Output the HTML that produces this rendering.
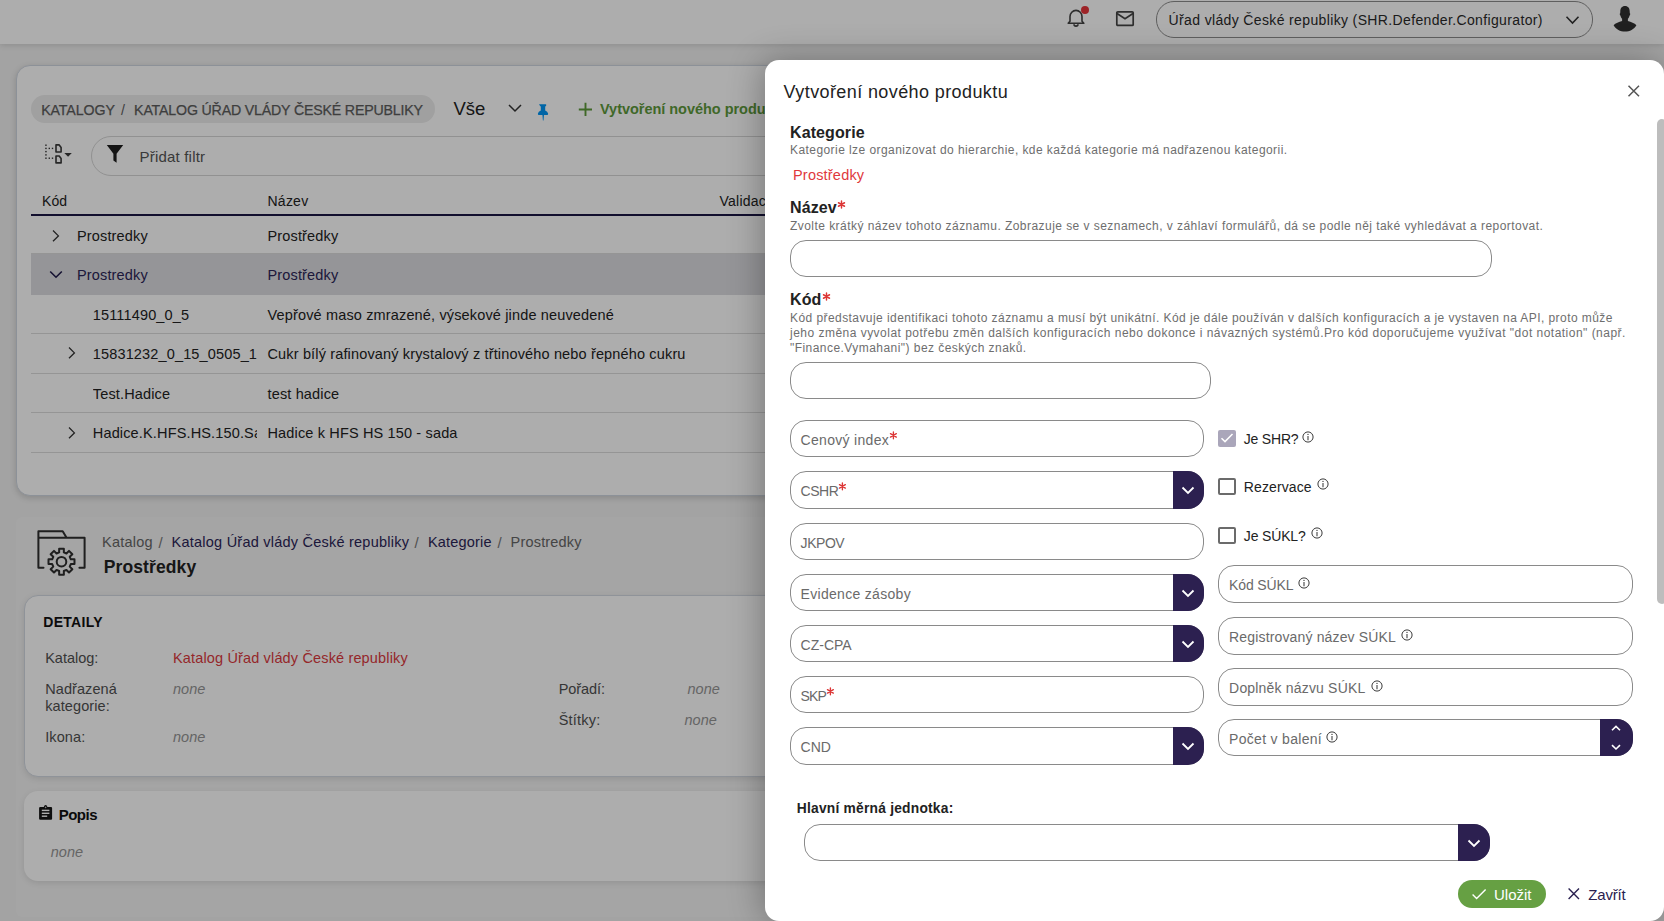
<!DOCTYPE html>
<html><head><meta charset="utf-8"><style>
*{box-sizing:border-box;margin:0;padding:0}
html,body{width:1664px;height:921px;overflow:hidden}
body{background:#f0f0f0;font-family:"Liberation Sans",sans-serif;color:#222;position:relative}
.a{position:absolute;white-space:nowrap;line-height:1}
svg{position:absolute;overflow:visible}
</style></head><body>
<div style="position:absolute;left:0px;top:0px;width:1664px;height:44px;background:#fff;box-shadow:0 1px 6px rgba(0,0,0,.14)"></div>
<svg style="left:1064px;top:7px" width="24" height="22" viewBox="0 0 24 22"><path d="M4.2 16.3 L6 14.2 V9.6 A6 6.2 0 0 1 18 9.6 V14.2 L19.8 16.3 Z" fill="none" stroke="#444" stroke-width="1.6" stroke-linejoin="round"/><path d="M10 17.2 A2 1.9 0 0 0 14 17.2" fill="none" stroke="#444" stroke-width="1.6"/></svg>
<div style="position:absolute;left:1080.8px;top:6px;width:8.4px;height:8.4px;background:#e8363c;border-radius:50%"></div>
<svg style="left:1115px;top:10px" width="20" height="17" viewBox="0 0 20 17"><rect x="1.8" y="1.8" width="16.4" height="13.6" rx="1" fill="none" stroke="#444" stroke-width="1.7"/><path d="M2 3.5 L10 8.8 L18 3.5" fill="none" stroke="#444" stroke-width="1.7"/></svg>
<div style="position:absolute;left:1156px;top:1px;width:437px;height:36.5px;border:1px solid #8c8c8c;border-radius:18px;background:#fff"></div>
<div class="a" style="left:1168.6px;top:12.95px;font-size:14px;font-weight:400;color:#2a2a2a;letter-spacing:0.36px;font-style:normal;">Úřad vlády České republiky (SHR.Defender.Configurator)</div>
<svg style="left:1565px;top:15px" width="15" height="10" viewBox="0 0 15 10"><path d="M1.5 1.8 L7.5 8 L13.5 1.8" fill="none" stroke="#333" stroke-width="1.6"/></svg>
<svg style="left:1612px;top:5px" width="26" height="28" viewBox="0 0 26 28"><path d="M13 0.9 C16.2 0.9 17.7 3.2 17.7 6.4 L17.8 8.2 C18.4 8.3 18.4 9.8 17.6 10.5 C17.2 12 16.6 13 15.9 13.8 V16 C19 16.9 22.6 18.3 24.4 20.2 C22 24.3 17.8 26.5 13 26.5 C8.2 26.5 4 24.3 1.6 20.2 C3.4 18.3 7 16.9 10.1 16 V13.8 C9.4 13 8.8 12 8.4 10.5 C7.6 9.8 7.6 8.3 8.2 8.2 L8.3 6.4 C8.3 3.2 9.8 0.9 13 0.9 Z" fill="#303030"/></svg>
<div style="position:absolute;left:16px;top:65px;width:1632px;height:431px;background:#fff;border:1px solid #cfd6e0;border-radius:14px;box-shadow:0 2px 6px rgba(0,0,0,.16)"></div>
<div style="position:absolute;left:31px;top:95px;width:404px;height:28px;background:#ececec;border-radius:14px"></div>
<div class="a" style="left:41.2px;top:103.28px;font-size:14.2px;font-weight:400;color:#5c5c5c;letter-spacing:-0.1px;font-style:normal;-webkit-text-stroke:0.25px #5c5c5c">KATALOGY</div>
<div class="a" style="left:121px;top:103.28px;font-size:14.2px;font-weight:400;color:#5c5c5c;letter-spacing:0px;font-style:normal;">/</div>
<div class="a" style="left:134.1px;top:103.28px;font-size:14.2px;font-weight:400;color:#5c5c5c;letter-spacing:-0.18px;font-style:normal;-webkit-text-stroke:0.25px #5c5c5c">KATALOG ÚŘAD VLÁDY ČESKÉ REPUBLIKY</div>
<div class="a" style="left:453.4px;top:99.64px;font-size:18.5px;font-weight:400;color:#222;letter-spacing:0px;font-style:normal;">Vše</div>
<svg style="left:508px;top:104px" width="14" height="9" viewBox="0 0 14 9"><path d="M1 1 L7 7 L13 1" fill="none" stroke="#333" stroke-width="1.5"/></svg>
<svg style="left:536px;top:103px" width="14" height="19" viewBox="0 0 14 19"><path d="M3 1.6 Q3 1.2 3.6 1.2 H9.6 Q10.2 1.2 10.2 1.6 V2.6 Q10.2 3.2 9.2 3.4 V7.6 Q11.6 8.6 12.1 10.6 Q12.3 12 11.4 12 H2.6 Q1.7 12 1.9 10.6 Q2.4 8.6 4.8 7.6 V3.4 Q3.8 3.2 3.8 2.6 Z" fill="#0096f5"/><path d="M6.4 11.8 H8 L7.5 17.4 H6.9 Z" fill="#0096f5"/></svg>
<svg style="left:578px;top:101.5px" width="15" height="15" viewBox="0 0 15 15"><path d="M7.5 0.8 V14 M0.8 7.5 H14" stroke="#5d9a3a" stroke-width="1.9"/></svg>
<div class="a" style="left:600px;top:102.23px;font-size:14.5px;font-weight:700;color:#5e9a3c;letter-spacing:-0.03px;font-style:normal;">Vytvoření nového produktu</div>
<svg style="left:44px;top:143px" width="30" height="22" viewBox="0 0 30 22"><g fill="#3a3a3a"><rect x="1.2" y="1.5" width="1.5" height="1.4"/><rect x="1.2" y="4.7" width="1.5" height="1.4"/><rect x="1.2" y="7.9" width="1.5" height="1.4"/><rect x="1.2" y="11.2" width="1.5" height="1.4"/><rect x="1.2" y="14.5" width="1.5" height="1.4"/><rect x="4.6" y="4.7" width="1.4" height="1.4"/><rect x="7.8" y="4.7" width="1.4" height="1.4"/><rect x="4.6" y="14.5" width="1.4" height="1.4"/><rect x="7.8" y="14.5" width="1.4" height="1.4"/></g><path d="M12 1.9 H15.2 L17.1 4.4 V9 H12 Z M12 13 H15.2 L17.1 15.5 V19.9 H12 Z" fill="none" stroke="#3a3a3a" stroke-width="1.6" stroke-linejoin="round"/><path d="M20.3 10.1 H27.8 L24.05 13.7 Z" fill="#3a3a3a"/></svg>
<div style="position:absolute;left:91px;top:136px;width:1600px;height:40px;border:1px solid #d6d6d6;border-radius:20px"></div>
<svg style="left:106px;top:144px" width="18" height="20" viewBox="0 0 18 20"><path d="M0.8 1 H17.2 L10.6 9.8 V18.8 L7.4 16.6 V9.8 Z" fill="#1e1e1e"/></svg>
<div class="a" style="left:139.5px;top:148.50px;font-size:15px;font-weight:400;color:#555;letter-spacing:0.2px;font-style:normal;">Přidat filtr</div>
<div class="a" style="left:42.1px;top:193.95px;font-size:14px;font-weight:400;color:#222;letter-spacing:0px;font-style:normal;">Kód</div>
<div class="a" style="left:267.5px;top:193.95px;font-size:14px;font-weight:400;color:#222;letter-spacing:0.24px;font-style:normal;">Název</div>
<div class="a" style="left:719.5px;top:193.95px;font-size:14px;font-weight:400;color:#222;letter-spacing:0.24px;font-style:normal;">Validace</div>
<div style="position:absolute;left:31px;top:214px;width:1600px;height:2px;background:#1b1745"></div>
<div style="position:absolute;left:31px;top:253px;width:1600px;height:1px;background:#dcdcdc"></div>
<svg style="left:51px;top:228.6px" width="10" height="14" viewBox="0 0 10 14"><path d="M2 1.5 L7.4 6.9 L2 12.3" fill="none" stroke="#333" stroke-width="1.3"/></svg>
<div class="a" style="left:77.0px;top:229.33px;font-size:14.5px;font-weight:400;color:#222;letter-spacing:0.15px;font-style:normal;overflow:hidden;padding-bottom:5px;width:180.0px">Prostredky</div>
<div class="a" style="left:267.5px;top:229.33px;font-size:14.5px;font-weight:400;color:#222;letter-spacing:0.15px;font-style:normal;">Prostředky</div>
<div style="position:absolute;left:31px;top:254px;width:1600px;height:41px;background:#dcdce0"></div>
<svg style="left:49px;top:270.4px" width="14" height="9" viewBox="0 0 14 9"><path d="M1.2 1.5 L7 7.2 L12.8 1.5" fill="none" stroke="#1f1a4a" stroke-width="1.6"/></svg>
<div class="a" style="left:77.0px;top:268.13px;font-size:14.5px;font-weight:400;color:#2b2557;letter-spacing:0.15px;font-style:normal;overflow:hidden;padding-bottom:5px;width:180.0px">Prostredky</div>
<div class="a" style="left:267.5px;top:268.13px;font-size:14.5px;font-weight:400;color:#2b2557;letter-spacing:0.15px;font-style:normal;">Prostředky</div>
<div style="position:absolute;left:31px;top:333px;width:1600px;height:1px;background:#dcdcdc"></div>
<div class="a" style="left:92.8px;top:307.73px;font-size:14.5px;font-weight:400;color:#222;letter-spacing:0.15px;font-style:normal;overflow:hidden;padding-bottom:5px;width:164.2px">15111490_0_5</div>
<div class="a" style="left:267.5px;top:307.73px;font-size:14.5px;font-weight:400;color:#222;letter-spacing:0.15px;font-style:normal;">Vepřové maso zmrazené, výsekové jinde neuvedené</div>
<div style="position:absolute;left:31px;top:373px;width:1600px;height:1px;background:#dcdcdc"></div>
<svg style="left:67px;top:346.2px" width="10" height="14" viewBox="0 0 10 14"><path d="M2 1.5 L7.4 6.9 L2 12.3" fill="none" stroke="#333" stroke-width="1.3"/></svg>
<div class="a" style="left:92.8px;top:346.93px;font-size:14.5px;font-weight:400;color:#222;letter-spacing:0.15px;font-style:normal;overflow:hidden;padding-bottom:5px;width:164.2px">15831232_0_15_0505_1221</div>
<div class="a" style="left:267.5px;top:346.93px;font-size:14.5px;font-weight:400;color:#222;letter-spacing:0.15px;font-style:normal;">Cukr bílý rafinovaný krystalový z třtinového nebo řepného cukru</div>
<div style="position:absolute;left:31px;top:412px;width:1600px;height:1px;background:#dcdcdc"></div>
<div class="a" style="left:92.8px;top:386.93px;font-size:14.5px;font-weight:400;color:#222;letter-spacing:0.15px;font-style:normal;overflow:hidden;padding-bottom:5px;width:164.2px">Test.Hadice</div>
<div class="a" style="left:267.5px;top:386.93px;font-size:14.5px;font-weight:400;color:#222;letter-spacing:0.15px;font-style:normal;">test hadice</div>
<div style="position:absolute;left:31px;top:452px;width:1600px;height:1px;background:#dcdcdc"></div>
<svg style="left:67px;top:425.5px" width="10" height="14" viewBox="0 0 10 14"><path d="M2 1.5 L7.4 6.9 L2 12.3" fill="none" stroke="#333" stroke-width="1.3"/></svg>
<div class="a" style="left:92.8px;top:426.23px;font-size:14.5px;font-weight:400;color:#222;letter-spacing:0.15px;font-style:normal;overflow:hidden;padding-bottom:5px;width:164.2px">Hadice.K.HFS.HS.150.Sada</div>
<div class="a" style="left:267.5px;top:426.23px;font-size:14.5px;font-weight:400;color:#222;letter-spacing:0.15px;font-style:normal;">Hadice k HFS HS 150 - sada</div>
<div style="position:absolute;left:16px;top:517px;width:1632px;height:400px;background:#f3f3f3;border-radius:6px"></div>
<svg style="left:32px;top:524px" width="60" height="56" viewBox="0 0 60 56"><path d="M11.5 43.8 H6.4 V7.2 H30.7 L34.6 13.7 H52.6 V43.8 H47.4 M6.4 13.7 H34.6" fill="none" stroke="#2e2e2e" stroke-width="2" stroke-linejoin="round" stroke-linecap="round"/><path d="M27.17 28.39 L27.14 24.71 L31.86 24.71 L31.83 28.39 L34.44 29.47 L37.01 26.85 L40.35 30.19 L37.73 32.76 L38.81 35.37 L42.49 35.34 L42.49 40.06 L38.81 40.03 L37.73 42.64 L40.35 45.21 L37.01 48.55 L34.44 45.93 L31.83 47.01 L31.86 50.69 L27.14 50.69 L27.17 47.01 L24.56 45.93 L21.99 48.55 L18.65 45.21 L21.27 42.64 L20.19 40.03 L16.51 40.06 L16.51 35.34 L20.19 35.37 L21.27 32.76 L18.65 30.19 L21.99 26.85 L24.56 29.47 Z" fill="none" stroke="#2e2e2e" stroke-width="2" stroke-linejoin="round"/><circle cx="29.5" cy="37.7" r="4.8" fill="none" stroke="#2e2e2e" stroke-width="2"/></svg>
<div class="a" style="left:102px;top:535.33px;font-size:14.5px;font-weight:400;color:#666;letter-spacing:0.25px;font-style:normal;">Katalog</div>
<div class="a" style="left:158.6px;top:534.90px;font-size:15px;font-weight:400;color:#777;letter-spacing:0px;font-style:normal;">/</div>
<div class="a" style="left:171.6px;top:535.33px;font-size:14.5px;font-weight:400;color:#2b2557;letter-spacing:0.23px;font-style:normal;">Katalog Úřad vlády České republiky</div>
<div class="a" style="left:414.4px;top:534.90px;font-size:15px;font-weight:400;color:#777;letter-spacing:0px;font-style:normal;">/</div>
<div class="a" style="left:427.9px;top:535.33px;font-size:14.5px;font-weight:400;color:#2b2557;letter-spacing:0.2px;font-style:normal;">Kategorie</div>
<div class="a" style="left:497.6px;top:534.90px;font-size:15px;font-weight:400;color:#777;letter-spacing:0px;font-style:normal;">/</div>
<div class="a" style="left:510.6px;top:535.33px;font-size:14.5px;font-weight:400;color:#666;letter-spacing:0.18px;font-style:normal;">Prostredky</div>
<div class="a" style="left:103.8px;top:558.89px;font-size:17.5px;font-weight:700;color:#222;letter-spacing:0.1px;font-style:normal;">Prostředky</div>
<div style="position:absolute;left:24px;top:594.5px;width:1632px;height:182px;background:#fff;border:1px solid #d3d9e2;border-radius:14px;box-shadow:0 2px 6px rgba(0,0,0,.10)"></div>
<div class="a" style="left:43.3px;top:615.15px;font-size:14px;font-weight:700;color:#111;letter-spacing:0.28px;font-style:normal;">DETAILY</div>
<div class="a" style="left:45.2px;top:651.03px;font-size:14.5px;font-weight:400;color:#505050;letter-spacing:0px;font-style:normal;">Katalog:</div>
<div class="a" style="left:173px;top:651.03px;font-size:14.5px;font-weight:400;color:#dc3a3e;letter-spacing:0.15px;font-style:normal;">Katalog Úřad vlády České republiky</div>
<div class="a" style="left:45.2px;top:682.13px;font-size:14.5px;font-weight:400;color:#505050;letter-spacing:0.08px;font-style:normal;">Nadřazená</div>
<div class="a" style="left:45.2px;top:699.03px;font-size:14.5px;font-weight:400;color:#505050;letter-spacing:0.1px;font-style:normal;">kategorie:</div>
<div class="a" style="left:173px;top:682.13px;font-size:14.5px;font-weight:400;color:#959595;letter-spacing:0px;font-style:italic;">none</div>
<div class="a" style="left:45.2px;top:730.03px;font-size:14.5px;font-weight:400;color:#505050;letter-spacing:0.1px;font-style:normal;">Ikona:</div>
<div class="a" style="left:173px;top:730.03px;font-size:14.5px;font-weight:400;color:#959595;letter-spacing:0px;font-style:italic;">none</div>
<div class="a" style="left:558.7px;top:681.73px;font-size:14.5px;font-weight:400;color:#505050;letter-spacing:-0.08px;font-style:normal;">Pořadí:</div>
<div class="a" style="left:687.5px;top:681.73px;font-size:14.5px;font-weight:400;color:#959595;letter-spacing:0px;font-style:italic;">none</div>
<div class="a" style="left:558.7px;top:713.13px;font-size:14.5px;font-weight:400;color:#505050;letter-spacing:0.2px;font-style:normal;">Štítky:</div>
<div class="a" style="left:684.5px;top:713.13px;font-size:14.5px;font-weight:400;color:#959595;letter-spacing:0px;font-style:italic;">none</div>
<div style="position:absolute;left:24px;top:791px;width:1632px;height:90px;background:#fff;border-radius:14px;box-shadow:0 2px 6px rgba(0,0,0,.10)"></div>
<svg style="left:34px;top:800px" width="30" height="24" viewBox="0 0 30 24"><path d="M6.3 6.9 H9.8 Q10.2 5 11.6 5 Q13 5 13.4 6.9 H17 Q18.1 6.9 18.1 8 V18.7 Q18.1 19.8 17 19.8 H6.3 Q5.1 19.8 5.1 18.7 V8 Q5.1 6.9 6.3 6.9 Z" fill="#161616"/><circle cx="11.6" cy="7.4" r="0.8" fill="#bbb"/><rect x="7.8" y="9.7" width="7.6" height="1.4" fill="#fff"/><rect x="7.8" y="12.6" width="7.6" height="1.4" fill="#fff"/><rect x="7.8" y="15.5" width="5.4" height="1.4" fill="#fff"/></svg>
<div class="a" style="left:58.7px;top:807.00px;font-size:15px;font-weight:700;color:#111;letter-spacing:-0.5px;font-style:normal;">Popis</div>
<div class="a" style="left:50.8px;top:845.13px;font-size:14.5px;font-weight:400;color:#959595;letter-spacing:0px;font-style:italic;">none</div>
<div style="position:absolute;left:0px;top:0px;width:1664px;height:921px;background:rgba(0,0,0,.32)"></div>
<div style="position:absolute;left:765px;top:60px;width:899px;height:861px;background:#fff;border-radius:14px;box-shadow:-3px 0 34px rgba(0,0,0,.30)"></div>
<div class="a" style="left:783.6px;top:82.86px;font-size:18px;font-weight:400;color:#222;letter-spacing:0.4px;font-style:normal;">Vytvoření nového produktu</div>
<svg style="left:1627px;top:85px" width="13" height="13" viewBox="0 0 13 13"><path d="M1.5 0.8 L12 11.3 M12 0.8 L1.5 11.3" stroke="#555" stroke-width="1.5"/></svg>
<div style="position:absolute;left:1657px;top:119px;width:10px;height:485px;background:#bdbdbd;border-radius:5px"></div>
<div class="a" style="left:790px;top:124.66px;font-size:16px;font-weight:700;color:#222;letter-spacing:0.1px;font-style:normal;">Kategorie</div>
<div class="a" style="left:790px;top:143.64px;font-size:12px;font-weight:400;color:#6e6e6e;letter-spacing:0.43px;font-style:normal;">Kategorie lze organizovat do hierarchie, kde každá kategorie má nadřazenou kategorii.</div>
<div class="a" style="left:793px;top:167.93px;font-size:14.5px;font-weight:400;color:#e0383c;letter-spacing:0.2px;font-style:normal;">Prostředky</div>
<div class="a" style="left:790px;top:200.46px;font-size:16px;font-weight:700;color:#222;letter-spacing:0.1px;font-style:normal;">Název<svg class="ast" style="position:relative;display:inline-block;vertical-align:top;top:-0.4px;margin-left:0.3px" width="9.0" height="9.0" viewBox="0 0 9.0 9.0"><path d="M4.50 1.00 L4.50 8.00 M7.53 2.75 L1.47 6.25 M7.53 6.25 L1.47 2.75 " stroke="#dc3535" stroke-width="1.45" stroke-linecap="round"/></svg></div>
<div class="a" style="left:790px;top:220.04px;font-size:12px;font-weight:400;color:#6e6e6e;letter-spacing:0.45px;font-style:normal;">Zvolte krátký název tohoto záznamu. Zobrazuje se v seznamech, v záhlaví formulářů, dá se podle něj také vyhledávat a reportovat.</div>
<div style="position:absolute;left:790px;top:240px;width:701.5px;height:37px;border:1px solid #8a8a8a;border-radius:16px"></div>
<div class="a" style="left:790px;top:292.16px;font-size:16px;font-weight:700;color:#222;letter-spacing:0.1px;font-style:normal;">Kód<svg class="ast" style="position:relative;display:inline-block;vertical-align:top;top:-0.4px;margin-left:0.3px" width="9.0" height="9.0" viewBox="0 0 9.0 9.0"><path d="M4.50 1.00 L4.50 8.00 M7.53 2.75 L1.47 6.25 M7.53 6.25 L1.47 2.75 " stroke="#dc3535" stroke-width="1.45" stroke-linecap="round"/></svg></div>
<div class="a" style="left:790px;top:311.54px;font-size:12px;font-weight:400;color:#6e6e6e;letter-spacing:0.43px;font-style:normal;">Kód představuje identifikaci tohoto záznamu a musí být unikátní. Kód je dále používán v dalších konfiguracích a je vystaven na API, proto může</div>
<div class="a" style="left:790px;top:326.84px;font-size:12px;font-weight:400;color:#6e6e6e;letter-spacing:0.48px;font-style:normal;">jeho změna vyvolat potřebu změn dalších konfiguracích nebo dokonce i návazných systémů.Pro kód doporučujeme využívat "dot notation" (např.</div>
<div class="a" style="left:790px;top:341.64px;font-size:12px;font-weight:400;color:#6e6e6e;letter-spacing:0.45px;font-style:normal;">"Finance.Vymahani") bez českých znaků.</div>
<div style="position:absolute;left:790px;top:362px;width:421px;height:37px;border:1px solid #8a8a8a;border-radius:16px"></div>
<div style="position:absolute;left:790px;top:420px;width:414px;height:37px;border:1px solid #8a8a8a;border-radius:16px;background:#fff"></div>
<div class="a" style="left:800.6px;top:432.75px;font-size:14px;font-weight:400;color:#6a6a6a;letter-spacing:0.3px;font-style:normal;">Cenový index<svg class="ast" style="position:relative;display:inline-block;vertical-align:top;top:-1.6px;margin-left:0.2px" width="8.8" height="8.8" viewBox="0 0 8.8 8.8"><path d="M4.40 1.00 L4.40 7.80 M7.34 2.70 L1.46 6.10 M7.34 6.10 L1.46 2.70 " stroke="#dc3535" stroke-width="1.35" stroke-linecap="round"/></svg></div>
<div style="position:absolute;left:790px;top:471px;width:414px;height:37.5px;border:1px solid #8a8a8a;border-radius:16px;background:#fff"></div>
<div style="position:absolute;left:1173px;top:471px;width:31px;height:37.5px;background:#2c2050;border-radius:0 16px 16px 0"></div>
<svg style="left:1181px;top:486.3px" width="14" height="9" viewBox="0 0 14 9"><path d="M1.5 1.5 L7 7 L12.5 1.5" fill="none" stroke="#fff" stroke-width="1.8"/></svg>
<div class="a" style="left:800.6px;top:483.75px;font-size:14px;font-weight:400;color:#6a6a6a;letter-spacing:-0.5px;font-style:normal;">CSHR<svg class="ast" style="position:relative;display:inline-block;vertical-align:top;top:-1.6px;margin-left:0.2px" width="8.8" height="8.8" viewBox="0 0 8.8 8.8"><path d="M4.40 1.00 L4.40 7.80 M7.34 2.70 L1.46 6.10 M7.34 6.10 L1.46 2.70 " stroke="#dc3535" stroke-width="1.35" stroke-linecap="round"/></svg></div>
<div style="position:absolute;left:790px;top:523px;width:414px;height:37px;border:1px solid #8a8a8a;border-radius:16px;background:#fff"></div>
<div class="a" style="left:800.6px;top:535.75px;font-size:14px;font-weight:400;color:#6a6a6a;letter-spacing:-0.45px;font-style:normal;">JKPOV</div>
<div style="position:absolute;left:790px;top:574px;width:414px;height:37px;border:1px solid #8a8a8a;border-radius:16px;background:#fff"></div>
<div style="position:absolute;left:1173px;top:574px;width:31px;height:37px;background:#2c2050;border-radius:0 16px 16px 0"></div>
<svg style="left:1181px;top:589.3px" width="14" height="9" viewBox="0 0 14 9"><path d="M1.5 1.5 L7 7 L12.5 1.5" fill="none" stroke="#fff" stroke-width="1.8"/></svg>
<div class="a" style="left:800.6px;top:586.75px;font-size:14px;font-weight:400;color:#6a6a6a;letter-spacing:0.3px;font-style:normal;">Evidence zásoby</div>
<div style="position:absolute;left:790px;top:625px;width:414px;height:37px;border:1px solid #8a8a8a;border-radius:16px;background:#fff"></div>
<div style="position:absolute;left:1173px;top:625px;width:31px;height:37px;background:#2c2050;border-radius:0 16px 16px 0"></div>
<svg style="left:1181px;top:640.3px" width="14" height="9" viewBox="0 0 14 9"><path d="M1.5 1.5 L7 7 L12.5 1.5" fill="none" stroke="#fff" stroke-width="1.8"/></svg>
<div class="a" style="left:800.6px;top:637.75px;font-size:14px;font-weight:400;color:#6a6a6a;letter-spacing:0px;font-style:normal;">CZ-CPA</div>
<div style="position:absolute;left:790px;top:676px;width:414px;height:37px;border:1px solid #8a8a8a;border-radius:16px;background:#fff"></div>
<div class="a" style="left:800.6px;top:688.75px;font-size:14px;font-weight:400;color:#6a6a6a;letter-spacing:-0.9px;font-style:normal;">SKP<svg class="ast" style="position:relative;display:inline-block;vertical-align:top;top:-1.6px;margin-left:0.2px" width="8.8" height="8.8" viewBox="0 0 8.8 8.8"><path d="M4.40 1.00 L4.40 7.80 M7.34 2.70 L1.46 6.10 M7.34 6.10 L1.46 2.70 " stroke="#dc3535" stroke-width="1.35" stroke-linecap="round"/></svg></div>
<div style="position:absolute;left:790px;top:727px;width:414px;height:37.5px;border:1px solid #8a8a8a;border-radius:16px;background:#fff"></div>
<div style="position:absolute;left:1173px;top:727px;width:31px;height:37.5px;background:#2c2050;border-radius:0 16px 16px 0"></div>
<svg style="left:1181px;top:742.3px" width="14" height="9" viewBox="0 0 14 9"><path d="M1.5 1.5 L7 7 L12.5 1.5" fill="none" stroke="#fff" stroke-width="1.8"/></svg>
<div class="a" style="left:800.6px;top:739.75px;font-size:14px;font-weight:400;color:#6a6a6a;letter-spacing:0px;font-style:normal;">CND</div>
<div style="position:absolute;left:1218px;top:429.5px;width:18px;height:17.5px;background:#aaa6ba;border-radius:2px"></div>
<svg style="left:1220px;top:432px" width="14" height="12" viewBox="0 0 14 12"><path d="M1.5 6.2 L5 9.6 L12.5 2" fill="none" stroke="#fff" stroke-width="1.5"/></svg>
<div style="position:absolute;left:1218px;top:477.5px;width:18px;height:17.5px;border:2px solid #6b6b6b;border-radius:2px"></div>
<div style="position:absolute;left:1218px;top:526.5px;width:18px;height:17.5px;border:2px solid #6b6b6b;border-radius:2px"></div>
<div class="a" style="left:1243.8px;top:432.35px;font-size:14px;font-weight:400;color:#222;letter-spacing:-0.2px;font-style:normal;">Je SHR?</div>
<svg style="left:1302.2px;top:430.8px" width="12" height="12" viewBox="0 0 12 12"><circle cx="6" cy="6" r="5.1" fill="none" stroke="#3a3a3a" stroke-width="1"/><path d="M6 5 V9.2" stroke="#3a3a3a" stroke-width="1.05"/><circle cx="6" cy="3.4" r="0.65" fill="#3a3a3a"/></svg>
<div class="a" style="left:1243.8px;top:479.95px;font-size:14px;font-weight:400;color:#222;letter-spacing:0.1px;font-style:normal;">Rezervace</div>
<svg style="left:1316.5px;top:478.2px" width="12" height="12" viewBox="0 0 12 12"><circle cx="6" cy="6" r="5.1" fill="none" stroke="#3a3a3a" stroke-width="1"/><path d="M6 5 V9.2" stroke="#3a3a3a" stroke-width="1.05"/><circle cx="6" cy="3.4" r="0.65" fill="#3a3a3a"/></svg>
<div class="a" style="left:1243.8px;top:529.35px;font-size:14px;font-weight:400;color:#222;letter-spacing:-0.15px;font-style:normal;">Je SÚKL?</div>
<svg style="left:1310.8px;top:527.2px" width="12" height="12" viewBox="0 0 12 12"><circle cx="6" cy="6" r="5.1" fill="none" stroke="#3a3a3a" stroke-width="1"/><path d="M6 5 V9.2" stroke="#3a3a3a" stroke-width="1.05"/><circle cx="6" cy="3.4" r="0.65" fill="#3a3a3a"/></svg>
<div style="position:absolute;left:1218px;top:565px;width:415px;height:37.5px;border:1px solid #8a8a8a;border-radius:16px;background:#fff"></div>
<div class="a" style="left:1229.1px;top:577.95px;font-size:14px;font-weight:400;color:#6a6a6a;letter-spacing:-0.15px;font-style:normal;">Kód SÚKL</div>
<svg style="left:1298.3999999999999px;top:577.2px" width="12" height="12" viewBox="0 0 12 12"><circle cx="6" cy="6" r="5.1" fill="none" stroke="#3a3a3a" stroke-width="1"/><path d="M6 5 V9.2" stroke="#3a3a3a" stroke-width="1.05"/><circle cx="6" cy="3.4" r="0.65" fill="#3a3a3a"/></svg>
<div style="position:absolute;left:1218px;top:617px;width:415px;height:37.5px;border:1px solid #8a8a8a;border-radius:16px;background:#fff"></div>
<div class="a" style="left:1229.1px;top:629.95px;font-size:14px;font-weight:400;color:#6a6a6a;letter-spacing:0.15px;font-style:normal;">Registrovaný název SÚKL</div>
<svg style="left:1401.3999999999999px;top:629.2px" width="12" height="12" viewBox="0 0 12 12"><circle cx="6" cy="6" r="5.1" fill="none" stroke="#3a3a3a" stroke-width="1"/><path d="M6 5 V9.2" stroke="#3a3a3a" stroke-width="1.05"/><circle cx="6" cy="3.4" r="0.65" fill="#3a3a3a"/></svg>
<div style="position:absolute;left:1218px;top:668px;width:415px;height:37.5px;border:1px solid #8a8a8a;border-radius:16px;background:#fff"></div>
<div class="a" style="left:1229.1px;top:680.95px;font-size:14px;font-weight:400;color:#6a6a6a;letter-spacing:0.18px;font-style:normal;">Doplněk názvu SÚKL</div>
<svg style="left:1370.5px;top:680.2px" width="12" height="12" viewBox="0 0 12 12"><circle cx="6" cy="6" r="5.1" fill="none" stroke="#3a3a3a" stroke-width="1"/><path d="M6 5 V9.2" stroke="#3a3a3a" stroke-width="1.05"/><circle cx="6" cy="3.4" r="0.65" fill="#3a3a3a"/></svg>
<div style="position:absolute;left:1218px;top:719px;width:415px;height:36.5px;border:1px solid #8a8a8a;border-radius:16px;background:#fff"></div>
<div class="a" style="left:1229.1px;top:731.95px;font-size:14px;font-weight:400;color:#6a6a6a;letter-spacing:0.3px;font-style:normal;">Počet v balení</div>
<svg style="left:1326.1px;top:731.2px" width="12" height="12" viewBox="0 0 12 12"><circle cx="6" cy="6" r="5.1" fill="none" stroke="#3a3a3a" stroke-width="1"/><path d="M6 5 V9.2" stroke="#3a3a3a" stroke-width="1.05"/><circle cx="6" cy="3.4" r="0.65" fill="#3a3a3a"/></svg>
<div style="position:absolute;left:1600px;top:719px;width:33px;height:36.5px;background:#2c2050;border-radius:0 16px 16px 0"></div>
<svg style="left:1610px;top:724px" width="12" height="28" viewBox="0 0 12 28"><path d="M2 6.3 L6 2.4 L10 6.3 M2 21.1 L6 25 L10 21.1" fill="none" stroke="#fff" stroke-width="1.6"/></svg>
<div class="a" style="left:796.8px;top:802.12px;font-size:13.8px;font-weight:700;color:#222;letter-spacing:0.22px;font-style:normal;">Hlavní měrná jednotka:</div>
<div style="position:absolute;left:804px;top:824.4px;width:686px;height:36.5px;border:1px solid #8a8a8a;border-radius:16px;background:#fff"></div>
<div style="position:absolute;left:1457.5px;top:824.4px;width:32.5px;height:36.5px;background:#2c2050;border-radius:0 16px 16px 0"></div>
<svg style="left:1467px;top:839px" width="14" height="9" viewBox="0 0 14 9"><path d="M1.5 1.5 L7 7 L12.5 1.5" fill="none" stroke="#fff" stroke-width="1.8"/></svg>
<div style="position:absolute;left:1458px;top:880px;width:88px;height:28px;background:#66a043;border-radius:14px"></div>
<svg style="left:1471px;top:887px" width="16" height="14" viewBox="0 0 16 14"><path d="M1.6 7.4 L5.6 11.4 L14.6 2.4" fill="none" stroke="#fff" stroke-width="1.4"/></svg>
<div class="a" style="left:1494px;top:886.90px;font-size:15px;font-weight:400;color:#fff;letter-spacing:0px;font-style:normal;">Uložit</div>
<svg style="left:1567px;top:887px" width="14" height="14" viewBox="0 0 14 14"><path d="M1.6 1.6 L12 12 M12 1.6 L1.6 12" stroke="#2a2150" stroke-width="1.4"/></svg>
<div class="a" style="left:1588.2px;top:886.90px;font-size:15px;font-weight:400;color:#2a2150;letter-spacing:-0.15px;font-style:normal;">Zavřít</div>
</body></html>
